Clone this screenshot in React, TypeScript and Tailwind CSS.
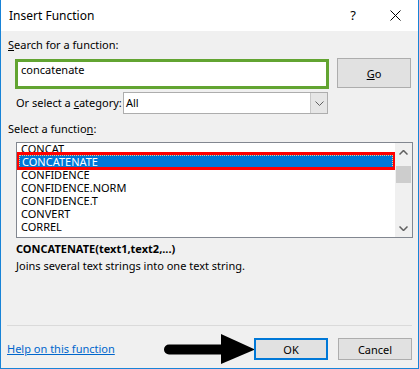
import React from 'react';

const functions = ['CONCAT', 'CONCATENATE', 'CONFIDENCE', 'CONFIDENCE.NORM', 'CONFIDENCE.T', 'CONVERT', 'CORREL'];

const font = { fontFamily: '"Noto Sans", "Open Sans", sans-serif' };

const App = () => {
    return (
        <div
            className="w-[419px] h-[369px] flex flex-col bg-[#f0f0f0] border-x border-b border-[#1883d7] text-[11px] text-black overflow-hidden"
            style={font}
        >
            {/* title bar */}
            <div className="h-[31px] shrink-0 bg-white flex items-center pl-[8px]">
                <span className="text-[12px] leading-none">Insert Function</span>
                <span className="ml-auto mr-[34px] text-[13px] leading-none">?</span>
                <svg width="11" height="11" viewBox="0 0 11 11" className="mr-[17px]">
                    <path d="M0.5 0.5 L10.5 10.5 M10.5 0.5 L0.5 10.5" stroke="#000" strokeWidth="1" />
                </svg>
            </div>

            <div className="flex flex-col flex-1">
                <div className="mt-[6px] ml-[7px] leading-[16px]">
                    <span className="underline">S</span>earch for a function:
                </div>

                {/* search row */}
                <div className="mt-[5px] flex items-start h-[31px]">
                    <div className="ml-[14px] mt-[1px] w-[314px] h-[30px] bg-white border-[3px] border-[#62a431] pl-[3px] leading-[16px]">
                        concatenate
                    </div>
                    <button className="ml-[8px] w-[74px] h-[30px] bg-[#e1e1e1] border border-[#adadad] leading-none">
                        <span className="underline">G</span>o
                    </button>
                </div>

                {/* category row */}
                <div className="mt-[3px] flex items-center h-[22px]">
                    <span className="ml-[15px] w-[107px] whitespace-nowrap">
                        Or select a <span className="underline">c</span>ategory:
                    </span>
                    <div className="w-[205px] h-[22px] bg-white border border-[#adadad] flex items-center">
                        <span className="pl-[2px] flex-1">All</span>
                        <div className="w-[17px] h-full bg-[#e6e6e6] border-l border-[#c8c8c8] flex items-center justify-center">
                            <svg width="9" height="5" viewBox="0 0 9 5">
                                <path d="M0.5 0.5 L4.5 4.5 L8.5 0.5" stroke="#606060" strokeWidth="1" fill="none" />
                            </svg>
                        </div>
                    </div>
                </div>

                <div className="mt-[7px] ml-[7px] leading-[16px]">
                    Select a functio<span className="underline">n</span>:
                </div>

                {/* function list */}
                <div className="mt-[5px] ml-[15px] w-[397px] h-[96px] bg-white border border-[#828790] flex">
                    <div className="flex-1 flex flex-col overflow-hidden pt-[1px]">
                        {functions.map((fn, i) =>
                            fn === 'CONCATENATE' ? (
                                <div key={fn} className="relative h-[13px] shrink-0">
                                    <div className="absolute left-[2px] right-[2px] top-0 bottom-0 bg-[#0078d7] border border-dotted border-[#f7c77f] text-white leading-[11px] pl-[2px]">
                                        {fn}
                                    </div>
                                    <div className="absolute -left-[1px] -right-[1px] -top-[3px] -bottom-[2px] border-[3px] border-[#ff0000]" />
                                </div>
                            ) : (
                                <div key={fn} className={`h-[13px] shrink-0 leading-[13px] pl-[4px] ${i === 0 ? '-mt-[2px]' : ''}`}>
                                    {fn}
                                </div>
                            )
                        )}
                    </div>
                    <div className="w-[17px] bg-[#f0f0f0] flex flex-col items-center">
                        <svg width="9" height="5" viewBox="0 0 9 5" className="mt-[7px]">
                            <path d="M0.5 4.5 L4.5 0.5 L8.5 4.5" stroke="#606060" strokeWidth="1.5" fill="none" />
                        </svg>
                        <div className="mt-[11px] w-[15px] h-[17px] bg-[#cdcdcd]" />
                        <svg width="9" height="5" viewBox="0 0 9 5" className="mt-auto mb-[6px]">
                            <path d="M0.5 0.5 L4.5 4.5 L8.5 0.5" stroke="#606060" strokeWidth="1.5" fill="none" />
                        </svg>
                    </div>
                </div>

                {/* description */}
                <div className="mt-[2px] ml-[15px] leading-[17px]">
                    <div className="font-bold">CONCATENATE(text1,text2,...)</div>
                    <div>Joins several text strings into one text string.</div>
                </div>

                <div className="mt-auto mx-[6px] h-px bg-[#dadada]" />

                {/* bottom row */}
                <div className="mt-[12px] mb-[8px] flex items-center h-[22px] pr-[6px]">
                    <a className="ml-[6px] text-[#0066cc] underline">Help on this function</a>
                    <svg width="92" height="31" viewBox="0 0 92 31" className="ml-auto -mr-[2px]">
                        <path d="M5 15.5 L58 15.5" stroke="#000" strokeWidth="10" strokeLinecap="round" />
                        <path d="M57 0 L91 15.5 L57 30 Z" fill="#000" />
                    </svg>
                    <button className="w-[74px] h-[22px] bg-[#e1e1e1] border-2 border-[#0078d7] leading-none">OK</button>
                    <button className="ml-[10px] w-[74px] h-[22px] bg-[#e1e1e1] border border-[#adadad] leading-none">Cancel</button>
                </div>
            </div>
        </div>
    );
};

export default App;
